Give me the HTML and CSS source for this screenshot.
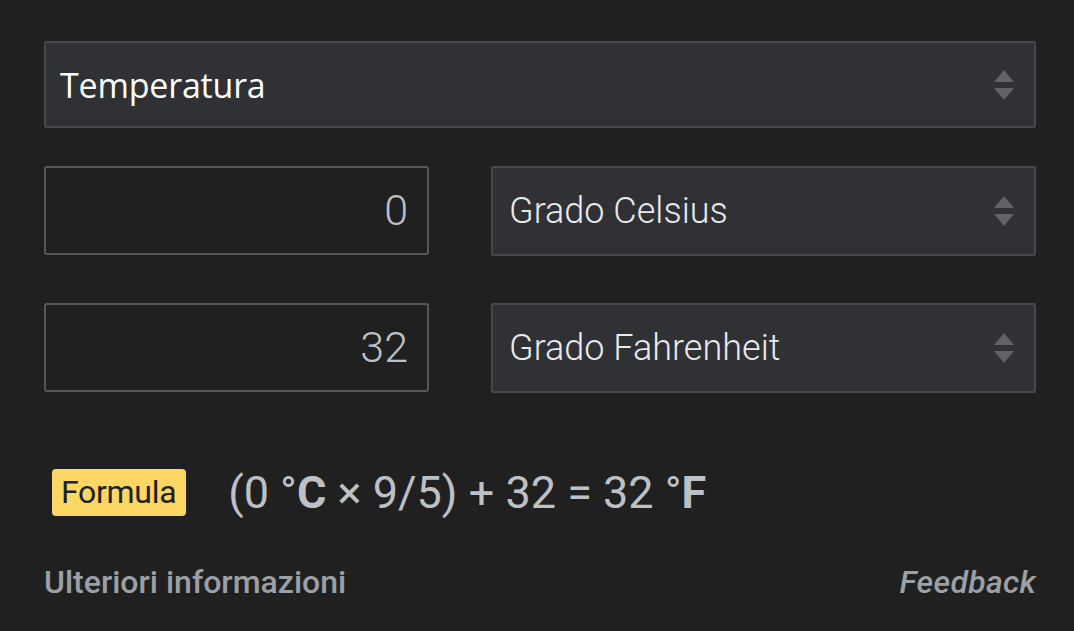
FILE: index.html
```html
<!DOCTYPE html>
<html lang="it">
<head>
<meta charset="utf-8">
<link rel="stylesheet" href="styles.css">
</head>
<body>
<div class="conv">
  <div class="select unit-type">
    <span class="select-label">Temperatura</span>
    <svg class="arrows" width="22" height="34" viewBox="0 0 22 34"><path d="M11 2 L21 14 H1 Z"/><path d="M1 20 H21 L11 32 Z"/></svg>
  </div>
  <div class="row">
    <div class="num">0</div>
    <div class="select unit">
      <span class="select-label">Grado Celsius</span>
      <svg class="arrows" width="22" height="34" viewBox="0 0 22 34"><path d="M11 2 L21 14 H1 Z"/><path d="M1 20 H21 L11 32 Z"/></svg>
    </div>
  </div>
  <div class="row">
    <div class="num">32</div>
    <div class="select unit">
      <span class="select-label">Grado Fahrenheit</span>
      <svg class="arrows" width="22" height="34" viewBox="0 0 22 34"><path d="M11 2 L21 14 H1 Z"/><path d="M1 20 H21 L11 32 Z"/></svg>
    </div>
  </div>
  <div class="formula-row">
    <span class="badge">Formula</span>
    <span class="formula">(0 °<b>C</b> × 9/5) + 32 = 32 °<b>F</b></span>
  </div>
  <div class="footer">
    <span class="more">Ulteriori informazioni</span>
    <span class="feedback">Feedback</span>
  </div>
</div>
</body>
</html>
```
FILE: styles.css
```css
html, body {
  margin: 0;
  background: #202020;
  height: 100%;
}
body {
  font-family: Roboto, "Liberation Sans", sans-serif;
  color: #e8eaed;
}
.conv {
  width: 992px;
  padding: 41px 0 0 44px;
}
.select {
  box-sizing: border-box;
  background: #303134;
  border: 2px solid #47484b;
  border-radius: 2px;
  display: flex;
  align-items: center;
  justify-content: space-between;
  padding: 0 19px 0 16px;
}
.arrows { fill: #5f6368; }
.unit-type {
  height: 87px;
  padding-left: 14px;
}
.unit-type .select-label {
  font-family: "Open Sans", sans-serif;
  font-size: 34px;
  color: #ffffff;
  letter-spacing: -0.2px;
}
.row {
  display: flex;
  justify-content: space-between;
  margin-top: 38px;
}
.row + .row { margin-top: 47px; }
.num {
  box-sizing: border-box;
  width: 385px;
  height: 89px;
  border: 2px solid #55575a;
  border-radius: 3px;
  text-align: right;
  padding-right: 19px;
  font-size: 43px;
  font-weight: 300;
  line-height: 85px;
  color: #bdc1c6;
}
.unit {
  width: 545px;
  height: 90px;
}
.unit .select-label {
  font-size: 36px;
  font-weight: 300;
  color: #e8eaed;
}
.formula-row {
  display: flex;
  align-items: center;
  margin-top: 73px;
  padding-left: 8px;
}
.badge {
  background: #fdd663;
  color: #202124;
  font-size: 32px;
  line-height: 37px;
  padding: 5px 10px 5px 9px;
  border-radius: 4px;
  letter-spacing: -0.3px;
}
.formula {
  margin-left: 42px;
  font-size: 45px;
  color: #bdc1c6;
}
.formula b { font-weight: 700; }
.footer {
  display: flex;
  justify-content: space-between;
  margin-top: 44px;
  font-size: 32px;
  font-weight: 500;
  color: #9aa0a6;
}
.feedback { font-style: italic; letter-spacing: 0.3px; }
```
